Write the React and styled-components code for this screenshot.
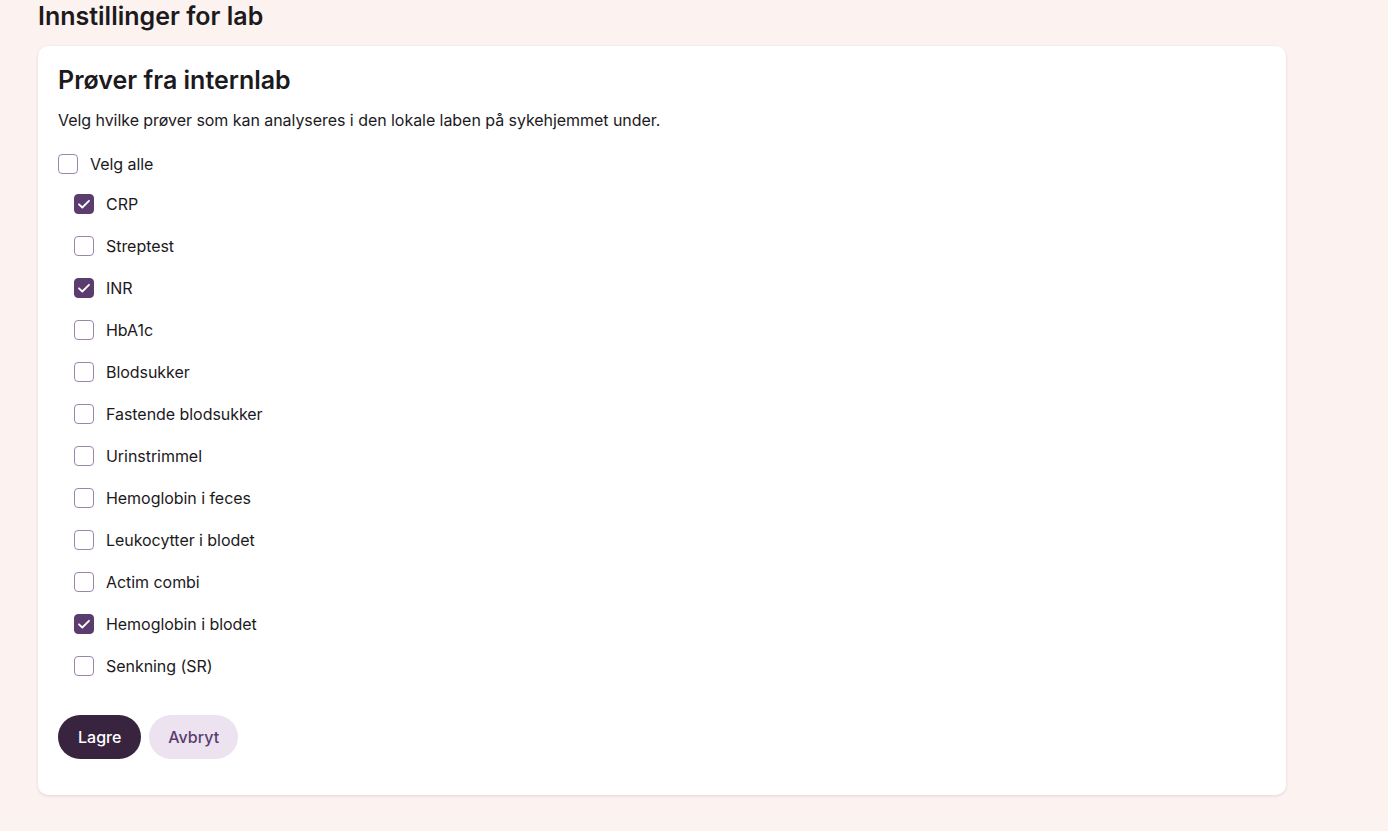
import React, { useState } from 'react';
import styled, { createGlobalStyle } from 'styled-components';

const GlobalStyle = createGlobalStyle`
  * { box-sizing: border-box; }
  body {
    margin: 0;
    background: #fcf2ef;
    font-family: Inter, "Noto Sans", sans-serif;
    color: #1c1a1d;
  }
`;

const Page = styled.div`
  padding: 0 102px 36px 38px;
  min-height: 831px;
`;

const PageTitle = styled.h1`
  font-size: 25px;
  line-height: 32px;
  font-weight: 600;
  margin: 0 0 14px;
`;

const Card = styled.section`
  background: #fff;
  border-radius: 10px;
  box-shadow: 0 1px 3px rgba(80, 40, 40, 0.14);
  padding: 18px 20px 36px;
`;

const CardTitle = styled.h2`
  font-size: 25px;
  line-height: 32px;
  font-weight: 600;
  margin: 0 0 12px;
`;

const Lead = styled.p`
  font-size: 16px;
  line-height: 24px;
  letter-spacing: -0.05px;
  margin: 0 0 20px;
`;

const List = styled.div`
  display: flex;
  flex-direction: column;
  gap: 18px;
  padding-left: ${p => (p.$nested ? '16px' : '0')};
  margin-top: ${p => (p.$nested ? '16px' : '0')};
`;

const Row = styled.label`
  display: flex;
  align-items: center;
  gap: 12px;
  font-size: 16px;
  line-height: 24px;
  letter-spacing: -0.05px;
  cursor: pointer;
`;

const Box = styled.span`
  width: 20px;
  height: 20px;
  border-radius: 4px;
  display: flex;
  align-items: center;
  justify-content: center;
  flex-shrink: 0;
  background: ${p => (p.$checked ? '#5a3d6e' : '#fff')};
  border: 1.5px solid ${p => (p.$checked ? '#5a3d6e' : '#9c85ad')};
`;

const Actions = styled.div`
  display: flex;
  gap: 8px;
  margin-top: 37px;
`;

const Button = styled.button`
  height: 44px;
  padding: 0 ${p => (p.$primary ? '20px' : '19px')};
  border: none;
  border-radius: 22px;
  font-family: inherit;
  font-size: 16px;
  font-weight: 500;
  background: ${p => (p.$primary ? '#38243f' : '#ece2f0')};
  color: ${p => (p.$primary ? '#fff' : '#5a3d6e')};
  cursor: pointer;
`;

const tests = [
  { name: 'CRP', checked: true },
  { name: 'Streptest', checked: false },
  { name: 'INR', checked: true },
  { name: 'HbA1c', checked: false },
  { name: 'Blodsukker', checked: false },
  { name: 'Fastende blodsukker', checked: false },
  { name: 'Urinstrimmel', checked: false },
  { name: 'Hemoglobin i feces', checked: false },
  { name: 'Leukocytter i blodet', checked: false },
  { name: 'Actim combi', checked: false },
  { name: 'Hemoglobin i blodet', checked: true },
  { name: 'Senkning (SR)', checked: false },
];

const Check = ({ checked }) => (
  <Box $checked={checked}>
    {checked && (
      <svg width="16" height="16" viewBox="0 0 16 16" fill="none">
        <path d="M3 8.3l3.3 3.2L13 4.8" stroke="#fff" strokeWidth="1.8" strokeLinecap="round" strokeLinejoin="round" />
      </svg>
    )}
  </Box>
);

export default function App() {
  const [items, setItems] = useState(tests);
  const all = items.every(t => t.checked);

  const toggle = idx =>
    setItems(items.map((t, i) => (i === idx ? { ...t, checked: !t.checked } : t)));

  return (
    <>
      <GlobalStyle />
      <Page>
        <PageTitle>Innstillinger for lab</PageTitle>
        <Card>
          <CardTitle>Prøver fra internlab</CardTitle>
          <Lead>Velg hvilke prøver som kan analyseres i den lokale laben på sykehjemmet under.</Lead>
          <Row onClick={() => setItems(items.map(t => ({ ...t, checked: !all })))}>
            <Check checked={all} />
            Velg alle
          </Row>
          <List $nested>
            {items.map((t, idx) => (
              <Row key={t.name} onClick={() => toggle(idx)}>
                <Check checked={t.checked} />
                {t.name}
              </Row>
            ))}
          </List>
          <Actions>
            <Button $primary>Lagre</Button>
            <Button>Avbryt</Button>
          </Actions>
        </Card>
      </Page>
    </>
  );
}
